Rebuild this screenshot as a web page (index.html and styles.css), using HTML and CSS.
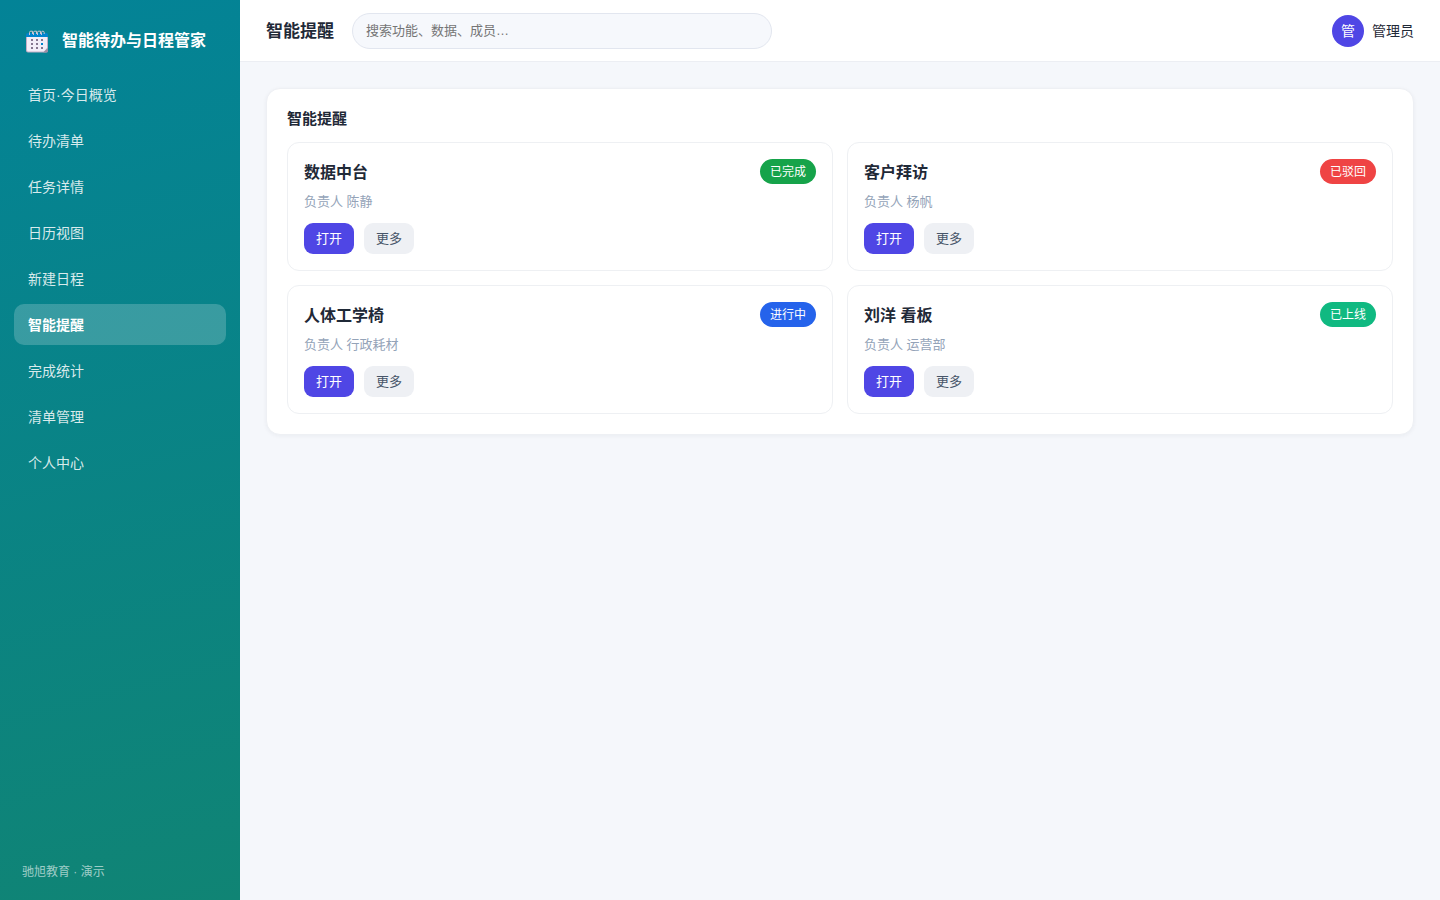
FILE: index.html
```html
<!DOCTYPE html>
<html lang="zh-CN">
<head>
<meta charset="utf-8">
<meta name="viewport" content="width=device-width, initial-scale=1">
<title>智能提醒</title>
<link rel="stylesheet" href="styles.css">
</head>
<body>
<div class="app">
  <aside class="sidebar">
    <div class="brand">
      <svg class="logo" viewBox="0 -4 24 28" aria-hidden="true">
        <path d="M1 7h22v13.500a2 2 0 0 1-2 2H3a2 2 0 0 1-2-2z" fill="#c4afc6"/>
        <path d="M2 7h20v11l-3 3.500H3.500A1.500 1.500 0 0 1 2 20z" fill="#f3eef8"/>
        <path d="M23 18v3a1.500 1.500 0 0 1-1.500 1.500H18z" fill="#998ea4"/>
        <path d="M3 3h18a2 2 0 0 1 2 2v2H1V5a2 2 0 0 1 2-2z" fill="#0084ce"/>
        <path d="M4.500 5V2.500q0-1.300 1.300-1.300h1.700V4M8.500 5V2.500q0-1.300 1.300-1.300h1.700V4M12.500 5V2.500q0-1.300 1.300-1.300h1.700V4M16.500 5V2.500q0-1.300 1.300-1.300q1.400 0 1.400 1.300V4" fill="none" stroke="#c9c4d4" stroke-width="1"/>
        <path d="M6 9h2v2H6zM11 9h2v2h-2zM16 9h2v2h-2zM6 13h2v2H6zM11 13h2v2h-2zM6 17h2v2H6zM11 17h2v2h-2zM16 17h2v2h-2z" fill="#85778f"/>
        <path d="M16 13h2v2h-2z" fill="#0084ce"/>
      </svg>
      <span>智能待办与日程管家</span>
    </div>
    <nav class="nav">
      <a class="nav-item" href="#">首页·今日概览</a>
      <a class="nav-item" href="#">待办清单</a>
      <a class="nav-item" href="#">任务详情</a>
      <a class="nav-item" href="#">日历视图</a>
      <a class="nav-item" href="#">新建日程</a>
      <a class="nav-item active" href="#" aria-current="page">智能提醒</a>
      <a class="nav-item" href="#">完成统计</a>
      <a class="nav-item" href="#">清单管理</a>
      <a class="nav-item" href="#">个人中心</a>
    </nav>
    <div class="side-foot">驰旭教育 · 演示</div>
  </aside>
  <div class="main">
    <header class="topbar">
      <h1 class="page-title">智能提醒</h1>
      <input class="search" type="search" aria-label="搜索" placeholder="搜索功能、数据、成员…">
      <div class="user"><span class="avatar">管</span><span class="user-name">管理员</span></div>
    </header>
    <main class="content">
      <section class="panel">
        <h2 class="panel-title">智能提醒</h2>
        <div class="grid">
          <article class="card">
            <div class="card-head"><h3 class="card-title">数据中台</h3><span class="badge done">已完成</span></div>
            <p class="meta">负责人 陈静</p>
            <div class="actions"><button class="btn primary" type="button">打开</button><button class="btn" type="button">更多</button></div>
          </article>
          <article class="card">
            <div class="card-head"><h3 class="card-title">客户拜访</h3><span class="badge rejected">已驳回</span></div>
            <p class="meta">负责人 杨帆</p>
            <div class="actions"><button class="btn primary" type="button">打开</button><button class="btn" type="button">更多</button></div>
          </article>
          <article class="card">
            <div class="card-head"><h3 class="card-title">人体工学椅</h3><span class="badge running">进行中</span></div>
            <p class="meta">负责人 行政耗材</p>
            <div class="actions"><button class="btn primary" type="button">打开</button><button class="btn" type="button">更多</button></div>
          </article>
          <article class="card">
            <div class="card-head"><h3 class="card-title">刘洋 看板</h3><span class="badge online">已上线</span></div>
            <p class="meta">负责人 运营部</p>
            <div class="actions"><button class="btn primary" type="button">打开</button><button class="btn" type="button">更多</button></div>
          </article>
        </div>
      </section>
    </main>
  </div>
</div>
</body>
</html>
```
FILE: styles.css
```css
* { box-sizing: border-box; }

body {
  margin: 0;
  background: #f5f7fb;
  color: #1f2937;
  font: 14px/21px "Liberation Sans", "Noto Sans CJK SC", sans-serif;
}

h1, h2, h3, p { margin: 0; }

.app { display: flex; min-height: 100vh; }

.sidebar {
  flex: 0 0 240px;
  display: flex;
  flex-direction: column;
  padding: 20px 14px 17px;
  background: linear-gradient(165deg, #038397, #108474);
  color: #fff;
}

.brand {
  display: flex;
  align-items: center;
  gap: 13px;
  height: 40px;
  margin-bottom: 14px;
  padding-left: 11px;
  font-size: 16px;
  font-weight: 700;
}

.logo { width: 24px; height: 28px; }

.nav { display: flex; flex-direction: column; gap: 5px; }

.nav-item {
  padding: 11px 14px 9px;
  border-radius: 10px;
  color: rgba(255, 255, 255, .85);
  text-decoration: none;
}

.nav-item.active {
  background: rgba(255, 255, 255, .2);
  color: #fff;
  font-weight: 700;
}

.side-foot {
  margin-top: auto;
  padding-left: 8px;
  color: rgba(255, 255, 255, .6);
  font-size: 12px;
}

.main { flex: 1; min-width: 0; }

.topbar {
  display: flex;
  align-items: center;
  gap: 18px;
  height: 62px;
  padding: 0 26px;
  border-bottom: 1px solid #eceef3;
  background: #fff;
}

.page-title { padding-top: 2px; font-size: 17px; line-height: 26px; }

.search {
  flex: 0 1 420px;
  min-width: 0;
  height: 36px;
  padding: 0 13px;
  border: 1px solid #e2e6ef;
  border-radius: 18px;
  background: #f6f8fc;
  font: inherit;
  font-size: 13px;
  appearance: none;
}

.search::placeholder { color: #757575; }

.user { display: flex; align-items: center; gap: 8px; margin-left: auto; }

.user-name { padding-top: 2px; }

.avatar {
  display: grid;
  place-items: center;
  width: 32px;
  height: 32px;
  padding-top: 2px;
  border-radius: 50%;
  background: #4f46e5;
  color: #fff;
}

.content { padding: 26px; }

.panel {
  padding: 20px;
  border: 1px solid #eef0f4;
  border-radius: 14px;
  background: #fff;
  box-shadow: 0 1px 4px rgba(20, 30, 60, .05);
}

.panel-title { margin-bottom: 14px; font-size: 15px; line-height: 19px; }

.grid { display: grid; grid-template-columns: 1fr 1fr; gap: 14px; }

.card { padding: 16px; border: 1px solid #eef0f3; border-radius: 12px; }

.card-head { display: flex; align-items: center; justify-content: space-between; }

.card-title { padding-top: 2px; font-size: 16px; line-height: 23px; }

.badge {
  padding: 4px 10px 2px;
  border-radius: 13px;
  color: #fff;
  font-size: 12px;
  line-height: 19px;
}

.done { background: #16a34a; }
.rejected { background: #ef4444; }
.running { background: #2563eb; }
.online { background: #10b981; }

.meta { margin: 7px 0 11px; color: #94a3b8; font-size: 13px; }

.actions { display: flex; gap: 10px; }

.btn {
  padding: 5px 12px;
  border: 0;
  border-radius: 9px;
  background: #eef0f4;
  color: #475569;
  font: inherit;
  font-size: 13px;
}

.btn.primary { background: #4f46e5; color: #fff; }
```
